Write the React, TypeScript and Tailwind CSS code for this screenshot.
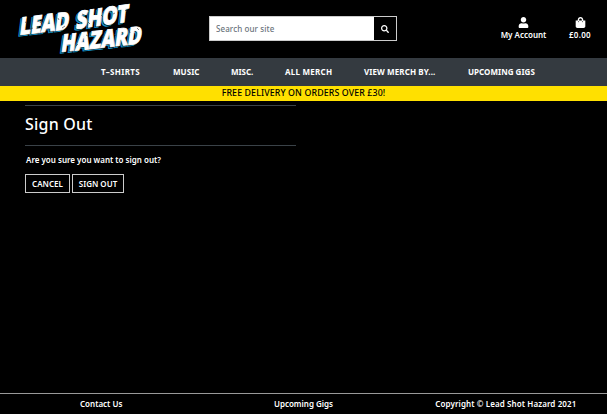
import React from "react";
import { FaSearch, FaShoppingBag, FaUser } from "react-icons/fa";

function Logo() {
  const lines = (fill: string, w: number) => (
    <g fill={fill} stroke={fill} strokeWidth={w} strokeLinejoin="miter" fontFamily="'Noto Sans', sans-serif" fontWeight="900" fontSize="24">
      <text transform="translate(19 35) rotate(-7) skewX(-14)" textLength="50" lengthAdjust="spacingAndGlyphs">LEAD</text>
      <text transform="translate(75.5 29) rotate(-8) skewX(-14)" textLength="53" lengthAdjust="spacingAndGlyphs">SHOT</text>
      <text transform="translate(60.5 52) rotate(-6) skewX(-14)" textLength="81" lengthAdjust="spacingAndGlyphs">HAZARD</text>
    </g>
  );
  return (
    <svg width="160" height="58" viewBox="0 0 160 58" className="shrink-0 overflow-visible">
      <g transform="translate(-1.8 1.6)">{lines("#1593c9", 0.8)}</g>
      <g transform="translate(-0.6 0.6)">{lines("#071820", 0.8)}</g>
      {lines("#fff", 0.8)}
      <path d="M25 22l2 1M30 29l3-1M42 20l-2 3M58 18l1 2M62 28l3-2M82 14l2 1M88 22l2 2M101 15l2 2M113 14l2-1M125 10l2 2M69 38l2 2M86 35l2 1M102 36l2 1M114 34l2 2M129 30l1 3M137 28l2 2M76 46l2-2" stroke="#333" strokeWidth=".6" />
    </svg>
  );
}

const nav: [string, string][] = [
  ["T–SHIRTS", "w-[40px] tracking-[0.35px]"],
  ["MUSIC", "w-[26px] tracking-[0.05px]"],
  ["MISC.", "w-[22px] tracking-[-0.05px]"],
  ["ALL MERCH", "w-[47px] tracking-[0.25px]"],
  ["VIEW MERCH BY...", "w-[72px] tracking-[0.1px]"],
  ["UPCOMING GIGS", "w-[67px] tracking-[0.03px]"],
];

export default function App() {
  return (
    <div className="flex h-[414px] w-[607px] flex-col overflow-hidden whitespace-nowrap bg-black font-['Noto_Sans','Open_Sans',sans-serif] text-[8px] font-semibold text-white">
      <header className="flex h-[58px] shrink-0">
        <Logo />
        <form className="ml-[49px] mt-4 flex h-[25px] w-[188px] border border-[#ccc]">
          <input aria-label="Search" placeholder="Search our site" className="w-[164px] bg-white px-1.5 text-[8px] font-medium tracking-[0.1px] text-black outline-none placeholder:text-[#6c757d]" />
          <button type="button" aria-label="Submit" className="flex flex-1 items-center justify-center bg-black"><FaSearch size={8} /></button>
        </form>
        <div className="ml-[103px] mt-[17px] flex w-[47px] flex-col items-center">
          <FaUser size={11} />
          <span className="mt-0.5 leading-[10px]">My Account</span>
        </div>
        <div className="ml-[21px] mt-[17px] flex w-[24px] flex-col items-center">
          <FaShoppingBag size={11} />
          <span className="mt-0.5 leading-[10px] tracking-[0.3px]">£0.00</span>
        </div>
      </header>
      <nav className="flex h-7 shrink-0 items-center gap-8 bg-[#343a40] pl-[101px] font-bold">
        {nav.map(([label, width]) => <a key={label} className={width}>{label}</a>)}
      </nav>
      <div className="flex h-[15px] shrink-0 items-center justify-center bg-[#ffe000] text-[8.8px] font-medium text-black">
        <span className="pt-px tracking-[0.12px]">FREE DELIVERY ON ORDERS OVER £30!</span>
      </div>
      <main className="flex w-[296px] grow flex-col pl-[25px] pt-1">
        <h1 className="h-[41px] border-y border-[#3a4248] pt-[7px] text-[16px] font-medium leading-[22px] tracking-[0.2px]">Sign Out</h1>
        <p className="mt-[8px] pl-px leading-[12px]">Are you sure you want to sign out?</p>
        <div className="mt-2 flex gap-[2px]">
          <button className="h-[19px] w-[45px] border border-[#ccc]">CANCEL</button>
          <button className="h-[19px] w-[52px] border border-[#ccc]">SIGN OUT</button>
        </div>
      </main>
      <footer className="grid h-[21px] shrink-0 grid-cols-3 items-center border-t border-[#999] text-center">
        <span>Contact Us</span><span>Upcoming Gigs</span><span className="tracking-[0.1px]">Copyright © Lead Shot Hazard 2021</span>
      </footer>
    </div>
  );
}
